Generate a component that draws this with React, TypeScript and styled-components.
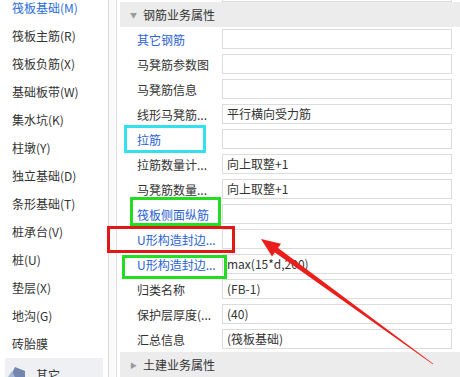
import styled, { createGlobalStyle } from 'styled-components'

const GlobalStyle = createGlobalStyle`
  html, body {
    margin: 0;
    padding: 0;
    background: #fff;
  }
  body {
    font-family: "Noto Sans CJK SC", "Microsoft YaHei", sans-serif;
    font-size: 12px;
    color: #333;
  }
`

const Screen = styled.div`
  position: relative;
  width: 460px;
  height: 377px;
  overflow: hidden;
  display: flex;
  background: #fff;
`

const Sidebar = styled.div`
  width: 108px;
  flex-shrink: 0;
  border-right: 1px solid #dadada;
  display: flex;
  flex-direction: column;
  margin-top: -6px;
`

const NavItem = styled.div<{ $active?: boolean }>`
  height: 28px;
  line-height: 28px;
  padding-left: 12px;
  white-space: nowrap;
  color: ${(p) => (p.$active ? '#2a6edb' : '#333')};
`

const NavGroup = styled.div`
  margin: 0 5px;
  height: 40px;
  background: #eef0f3;
  display: flex;
  align-items: flex-end;
  gap: 10px;
  padding-left: 3px;
`

const GroupLabel = styled.span`
  line-height: 16px;
  margin-bottom: -6px;
`

const Gutter = styled.div`
  width: 7px;
  flex-shrink: 0;
  background: #fafafa;
  border-right: 1px solid #e0e0e0;
`

const Main = styled.div`
  flex: 1;
  padding-left: 3px;
  display: flex;
  flex-direction: column;
`

const CutBox = styled.div`
  height: 2px;
  margin: 0 8px 0 102px;
  border: 1px solid #dcdcdc;
  border-top: none;
`

const SectionHeader = styled.div<{ $open?: boolean }>`
  height: 25px;
  flex-shrink: 0;
  background: #ececec;
  display: flex;
  align-items: center;
  padding-left: 10px;
  gap: 6px;
  color: #333;
`

const Caret = styled.span`
  width: 7px;
  display: flex;
  justify-content: center;
  color: #9a9a9a;
  font-size: 7px;
`

const PropRow = styled.div`
  height: 25px;
  flex-shrink: 0;
  display: grid;
  grid-template-columns: 102px 1fr;
`

const PropLabel = styled.div<{ $link?: boolean }>`
  padding-left: 17px;
  line-height: 25px;
  white-space: nowrap;
  overflow: hidden;
  color: ${(p) => (p.$link ? '#2b5fd6' : '#333')};
`

const PropValue = styled.div`
  margin: 2px 8px 3px 0;
  height: 20px;
  box-sizing: border-box;
  border: 1px solid #dcdcdc;
  padding-left: 4px;
  line-height: 18px;
  white-space: nowrap;
  overflow: hidden;
  color: #333;
`

const Mark = styled.div<{ $x: number; $y: number; $w: number; $h: number; $color: string }>`
  position: absolute;
  left: ${(p) => p.$x}px;
  top: ${(p) => p.$y}px;
  width: ${(p) => p.$w}px;
  height: ${(p) => p.$h}px;
  box-sizing: border-box;
  border: 3px solid ${(p) => p.$color};
  pointer-events: none;
`

const Overlay = styled.svg`
  position: absolute;
  left: 0;
  top: 0;
  pointer-events: none;
`

const navItems = [
  '筏板基础(M)',
  '筏板主筋(R)',
  '筏板负筋(X)',
  '基础板带(W)',
  '集水坑(K)',
  '柱墩(Y)',
  '独立基础(D)',
  '条形基础(T)',
  '桩承台(V)',
  '桩(U)',
  '垫层(X)',
  '地沟(G)',
  '砖胎膜',
]

const props: { label: string; value?: string; link?: boolean }[] = [
  { label: '其它钢筋', link: true },
  { label: '马凳筋参数图' },
  { label: '马凳筋信息' },
  { label: '线形马凳筋...', value: '平行横向受力筋' },
  { label: '拉筋', link: true },
  { label: '拉筋数量计...', value: '向上取整+1' },
  { label: '马凳筋数量...', value: '向上取整+1' },
  { label: '筏板侧面纵筋', link: true },
  { label: 'U形构造封边...', link: true },
  { label: 'U形构造封边...', value: 'max(15*d,200)', link: true },
  { label: '归类名称', value: '(FB-1)' },
  { label: '保护层厚度(...', value: '(40)' },
  { label: '汇总信息', value: '(筏板基础)' },
]

const App = () => {
  return (
    <>
      <GlobalStyle />
      <Screen>
        <Sidebar>
          {navItems.map((name, i) => (
            <NavItem key={name} $active={i === 0}>
              {name}
            </NavItem>
          ))}
          <NavGroup>
            <svg width="18" height="12" viewBox="0 0 18 12">
              <polygon points="2,12 7,2 17,6 17,12" fill="#7286b0" />
              <polygon points="0,12 4,6 7,12" fill="#a9b6d2" />
            </svg>
            <GroupLabel>其它</GroupLabel>
          </NavGroup>
        </Sidebar>
        <Gutter />
        <Main>
          <CutBox />
          <SectionHeader $open>
            <Caret>▼</Caret>
            钢筋业务属性
          </SectionHeader>
          {props.map((p, i) => (
            <PropRow key={i}>
              <PropLabel $link={p.link}>{p.label}</PropLabel>
              <PropValue>{p.value}</PropValue>
            </PropRow>
          ))}
          <SectionHeader>
            <Caret>▶</Caret>
            土建业务属性
          </SectionHeader>
        </Main>

        <Mark $x={124} $y={125} $w={82} $h={28} $color="#35e0ee" />
        <Mark $x={130} $y={197} $w={91} $h={29} $color="#22dd22" />
        <Mark $x={107} $y={226} $w={128} $h={27} $color="#e01818" />
        <Mark $x={122} $y={255} $w={105} $h={24} $color="#22dd22" />

        <Overlay width="460" height="377" viewBox="0 0 460 377">
          <polygon
            points="274.8,245.5 433.2,363.7 432.8,364.3 271.4,250.1"
            fill="#ea1f1b"
          />
          <polygon points="261,239 281,243.8 272,256.6" fill="#ea1f1b" />
        </Overlay>
      </Screen>
    </>
  )
}

export default App
